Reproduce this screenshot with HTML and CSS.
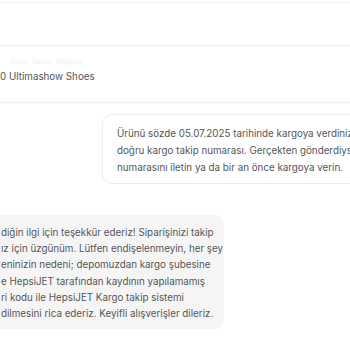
FILE: index.html
```html
<!DOCTYPE html>
<html lang="tr">
  <head>
    <meta charset="UTF-8" />
    <meta name="viewport" content="width=device-width, initial-scale=1.0" />
    <title>Soru Detayı</title>
    <link rel="stylesheet" href="styles.css">
  </head>
  <body>
    <div class="page">
      <div class="header"></div>
      <div class="product">
        <span class="product-sub">Ürün · Satıcı · Mağaza</span>
        <span class="product-name">0 Ultimashow Shoes</span>
      </div>
      <div class="chat">
        <div class="bubble bubble-customer">
          <p>Ürünü sözde 05.07.2025 tarihinde kargoya verdiniz. Ama bu</p>
          <p>doğru kargo takip numarası. Gerçekten gönderdiyseniz</p>
          <p>numarasını iletin ya da bir an önce kargoya verin.</p>
        </div>
        <div class="bubble bubble-seller">
          <p>diğin ilgi için teşekkür ederiz! Siparişinizi takip</p>
          <p>ız için üzgünüm. Lütfen endişelenmeyin, her şey</p>
          <p>eninizin nedeni; depomuzdan kargo şubesine</p>
          <p>e HepsiJET tarafından kaydının yapılamamış</p>
          <p>ri kodu ile HepsiJET Kargo takip sistemi</p>
          <p>dilmesini rica ederiz. Keyifli alışverişler dileriz.</p>
        </div>
      </div>
    </div>
  </body>
</html>
```

FILE: styles.css
```css
body {
  margin: 0;
  padding: 0;
  background: #ffffff;
  font-family: Inter, "Noto Sans", Arial, sans-serif;
  color: #555555;
  overflow: hidden;
}
p {
  margin: 0;
  white-space: nowrap;
}
.page {
  width: 350px;
  height: 350px;
  overflow: hidden;
}
.header {
  margin-top: 2px;
  height: 42px;
  border-top: 1px solid #efefef;
  border-bottom: 1px solid #ececec;
}
.product {
  display: flex;
  flex-direction: column;
  height: 57px;
  padding-top: 11px;
  box-sizing: border-box;
  border-bottom: 1px solid #ececec;
}
.product-sub {
  padding-left: 10px;
  font-size: 7px;
  line-height: 10px;
  color: #f1f1f1;
}
.product-name {
  margin-top: 2px;
  font-size: 9.8px;
  line-height: 16px;
  color: #555555;
}
.chat {
  display: flex;
  flex-direction: column;
  padding-top: 11px;
  gap: 31px;
}
.bubble {
  font-size: 9.8px;
  line-height: 16.2px;
  color: #555555;
}
.bubble-customer {
  margin-left: 102px;
  width: 300px;
  padding: 10px 15px 7px 14px;
  line-height: 17px;
  border: 1px solid #ececec;
  border-radius: 10px;
  background: #ffffff;
}
.bubble-seller {
  margin-left: -20px;
  width: 244px;
  padding: 10px 0 7px 21px;
  box-sizing: border-box;
  border-radius: 10px;
  background: #f5f5f5;
}
```
